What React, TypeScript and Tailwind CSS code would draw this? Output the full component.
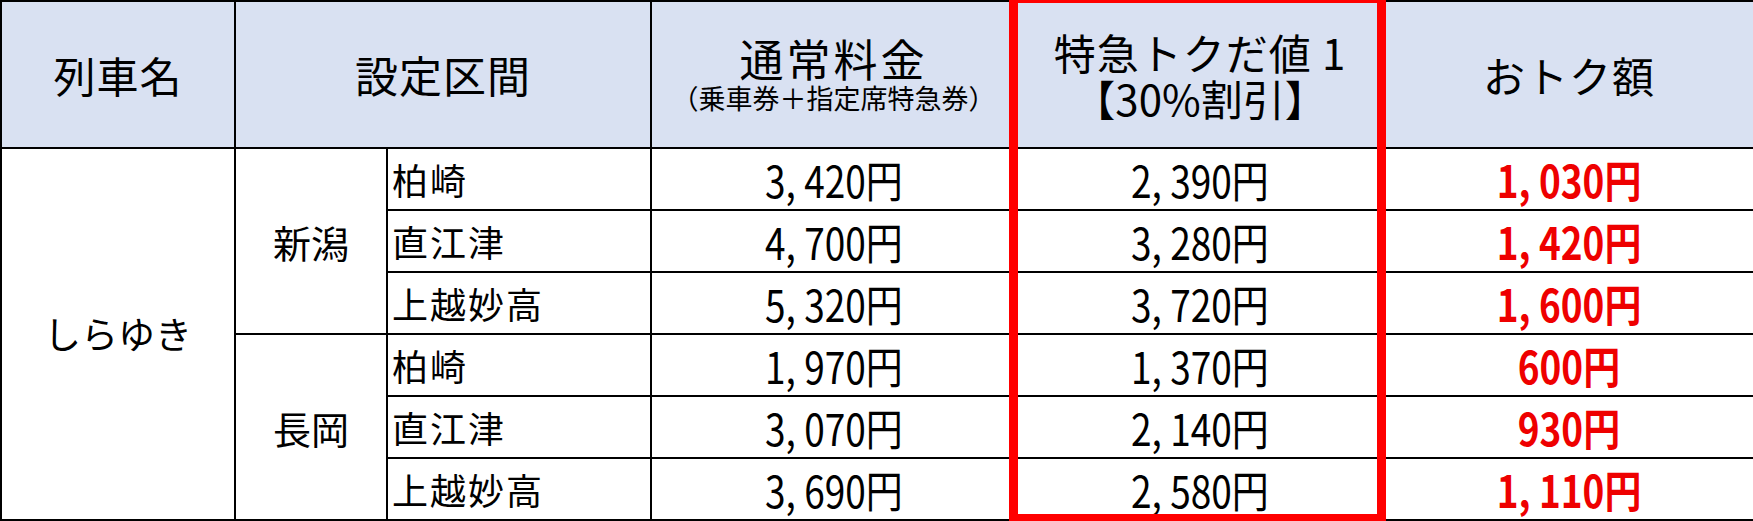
import React from "react";

const cell = "border-r-2 border-b-2 border-black flex items-center";
const jp = "font-['Noto_Sans_CJK_JP',sans-serif]";

const rows = [
  { stop: "柏崎", normal: "3, 420円", toku: "2, 390円", save: "1, 030円" },
  { stop: "直江津", normal: "4, 700円", toku: "3, 280円", save: "1, 420円" },
  { stop: "上越妙高", normal: "5, 320円", toku: "3, 720円", save: "1, 600円" },
  { stop: "柏崎", normal: "1, 970円", toku: "1, 370円", save: "600円" },
  { stop: "直江津", normal: "3, 070円", toku: "2, 140円", save: "930円" },
  { stop: "上越妙高", normal: "3, 690円", toku: "2, 580円", save: "1, 110円" },
];

const rowStart = [
  "row-start-2",
  "row-start-3",
  "row-start-4",
  "row-start-5",
  "row-start-6",
  "row-start-7",
];

function Num({ children, red }: { children: React.ReactNode; red?: boolean }) {
  return (
    <span
      className={`inline-block scale-x-[0.84] text-[44px] leading-[50px] ${
        red ? "font-bold text-[#ee0000]" : ""
      }`}
    >
      {children}
    </span>
  );
}

export default function App() {
  return (
    <div className={`relative w-[1753px] h-[521px] bg-white text-black ${jp}`}>
      <div className="grid grid-cols-[234px_152px_264px_365px_368px_370px] grid-rows-[147px_repeat(6,62px)] border-t-2 border-l-2 border-black w-[1753px]">
        {/* header */}
        <div className={`${cell} col-start-1 row-start-1 justify-center bg-[#d9e1f2] text-[42px] tracking-[1px]`}>列車名</div>
        <div className={`${cell} col-start-2 col-span-2 row-start-1 justify-center bg-[#d9e1f2] text-[43px] tracking-[1px]`}>設定区間</div>
        <div className={`${cell} col-start-4 row-start-1 flex-col justify-center bg-[#d9e1f2]`}>
          <div className="text-[44px] leading-[46px] tracking-[3px]">通常料金</div>
          <div className="text-[27px] leading-[34px]">（乗車券＋指定席特急券）</div>
        </div>
        <div className={`${cell} col-start-5 row-start-1 flex-col justify-center bg-[#d9e1f2] text-[42px] leading-[46px]`}>
          <div className="tracking-[1px]">特急トクだ値 1</div>
          <div>【30%割引】</div>
        </div>
        <div className={`${cell} col-start-6 row-start-1 justify-center bg-[#d9e1f2] text-[42px] tracking-[1px]`}>おトク額</div>

        {/* body */}
        <div className={`${cell} col-start-1 row-start-2 row-span-6 justify-center text-[37px]`}>しらゆき</div>
        <div className={`${cell} col-start-2 row-start-2 row-span-3 justify-center text-[38px]`}>新潟</div>
        <div className={`${cell} col-start-2 row-start-5 row-span-3 justify-center text-[38px]`}>長岡</div>

        {rows.map((r, i) => (
          <React.Fragment key={i}>
            <div className={`${cell} col-start-3 ${rowStart[i]} pl-1 text-[36px] tracking-[2px]`}>{r.stop}</div>
            <div className={`${cell} col-start-4 ${rowStart[i]} justify-center`}>
              <Num>{r.normal}</Num>
            </div>
            <div className={`${cell} col-start-5 ${rowStart[i]} justify-center`}>
              <Num>{r.toku}</Num>
            </div>
            <div className={`${cell} col-start-6 ${rowStart[i]} justify-center`}>
              <Num red>{r.save}</Num>
            </div>
          </React.Fragment>
        ))}
      </div>
      {/* red highlight box over the 特急トクだ値 column */}
      <div className="absolute left-[1009px] top-0 w-[377px] h-[521px] border-x-[9px] border-t-[3px] border-b-[7px] border-[#ff0000] pointer-events-none" />
    </div>
  );
}
